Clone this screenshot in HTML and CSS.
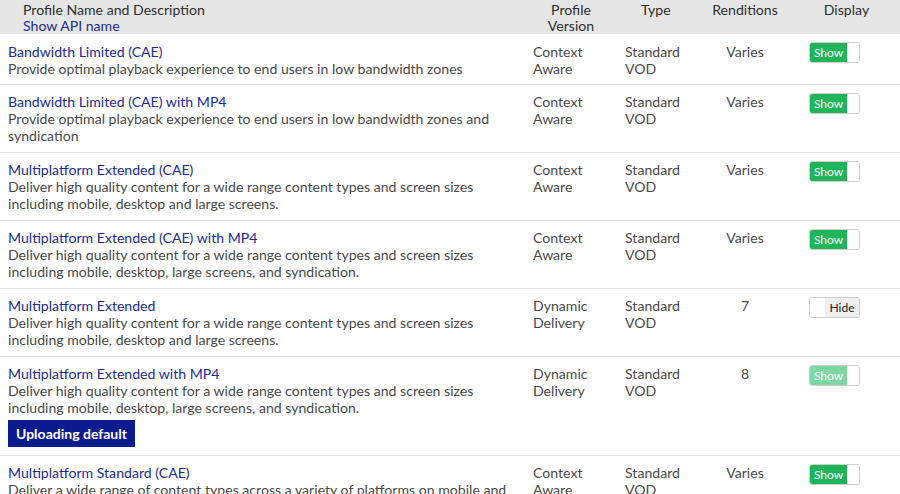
FILE: index.html
```html
<!DOCTYPE html>
<html>
<head>
<meta charset="utf-8">
<link rel="stylesheet" href="styles.css">
</head>
<body>
<table class="profiles">
  <colgroup>
    <col class="c-name"><col class="c-ver"><col class="c-type"><col class="c-rend"><col class="c-disp">
  </colgroup>
  <thead>
    <tr>
      <th class="h-name">Profile Name and Description<br><a class="link">Show API name</a></th>
      <th class="h-center">Profile<br>Version</th>
      <th class="h-type">Type</th>
      <th class="h-center">Renditions</th>
      <th class="h-center">Display</th>
    </tr>
  </thead>
  <tbody>
    <tr>
      <td><a class="link">Bandwidth Limited (CAE)</a><div class="desc">Provide optimal playback experience to end users in low bandwidth zones</div></td>
      <td>Context<br>Aware</td>
      <td>Standard<br>VOD</td>
      <td class="rend">Varies</td>
      <td class="disp"><span class="toggle on"><span class="lbl">Show</span><span class="knob"></span></span></td>
    </tr>
    <tr>
      <td><a class="link">Bandwidth Limited (CAE) with MP4</a><div class="desc">Provide optimal playback experience to end users in low bandwidth zones and syndication</div></td>
      <td>Context<br>Aware</td>
      <td>Standard<br>VOD</td>
      <td class="rend">Varies</td>
      <td class="disp"><span class="toggle on"><span class="lbl">Show</span><span class="knob"></span></span></td>
    </tr>
    <tr>
      <td><a class="link">Multiplatform Extended (CAE)</a><div class="desc">Deliver high quality content for a wide range content types and screen sizes including mobile, desktop and large screens.</div></td>
      <td>Context<br>Aware</td>
      <td>Standard<br>VOD</td>
      <td class="rend">Varies</td>
      <td class="disp"><span class="toggle on"><span class="lbl">Show</span><span class="knob"></span></span></td>
    </tr>
    <tr>
      <td><a class="link">Multiplatform Extended (CAE) with MP4</a><div class="desc">Deliver high quality content for a wide range content types and screen sizes including mobile, desktop, large screens, and syndication.</div></td>
      <td>Context<br>Aware</td>
      <td>Standard<br>VOD</td>
      <td class="rend">Varies</td>
      <td class="disp"><span class="toggle on"><span class="lbl">Show</span><span class="knob"></span></span></td>
    </tr>
    <tr>
      <td><a class="link">Multiplatform Extended</a><div class="desc">Deliver high quality content for a wide range content types and screen sizes including mobile, desktop and large screens.</div></td>
      <td>Dynamic<br>Delivery</td>
      <td>Standard<br>VOD</td>
      <td class="rend">7</td>
      <td class="disp"><span class="toggle off"><span class="knob"></span><span class="lbl">Hide</span></span></td>
    </tr>
    <tr>
      <td><a class="link">Multiplatform Extended with MP4</a><div class="desc">Deliver high quality content for a wide range content types and screen sizes including mobile, desktop, large screens, and syndication.</div><button class="default-btn">Uploading default</button></td>
      <td>Dynamic<br>Delivery</td>
      <td>Standard<br>VOD</td>
      <td class="rend">8</td>
      <td class="disp"><span class="toggle on faded"><span class="lbl">Show</span><span class="knob"></span></span></td>
    </tr>
    <tr>
      <td><a class="link">Multiplatform Standard (CAE)</a><div class="desc">Deliver a wide range of content types across a variety of platforms on mobile and desktop.</div></td>
      <td>Context<br>Aware</td>
      <td>Standard<br>VOD</td>
      <td class="rend">Varies</td>
      <td class="disp"><span class="toggle on"><span class="lbl">Show</span><span class="knob"></span></span></td>
    </tr>
  </tbody>
</table>
</body>
</html>
```

FILE: styles.css
```css
html, body {
  margin: 0;
  padding: 0;
  background: #fff;
}
body {
  font-family: Lato, "Open Sans", sans-serif;
  font-size: 14.1px;
  color: #4a4a4a;
  overflow: hidden;
  height: 494px;
}
.profiles {
  width: 900px;
  border-collapse: collapse;
  table-layout: fixed;
}
.c-name { width: 525px; }
.c-ver { width: 92px; }
.c-type { width: 80px; }
.c-rend { width: 96px; }
.c-disp { width: 107px; }

thead th {
  background: #e6e6e6;
  font-weight: normal;
  color: #2e2e2e;
  line-height: 16px;
  padding: 2px 0 0 0;
  height: 32px;
  vertical-align: top;
}
.h-name {
  text-align: left;
  padding-left: 23px;
}
.h-center {
  text-align: center;
}
.h-type {
  text-align: left;
  padding-left: 24px;
}
.link {
  color: #1c2c9c;
  text-decoration: none;
  cursor: pointer;
}
tbody td {
  vertical-align: top;
  padding: 8px 0 8px 8px;
  line-height: 17px;
  border-bottom: 1px solid #dedede;
}
tbody tr:first-child td {
  padding-top: 9px;
  padding-bottom: 7px;
}
.desc {
  color: #4a4a4a;
}
.rend {
  text-align: center;
  padding-left: 0;
}
tbody td.disp {
  padding-left: 16px;
}
.toggle {
  display: flex;
  width: 49px;
  height: 19px;
  border: 1px solid #cfcfcf;
  border-radius: 3px;
  overflow: hidden;
  font-size: 12px;
  line-height: 19px;
  background: #fff;
}
tbody tr:first-child .toggle {
  margin-top: -1px;
}
.toggle.on .lbl {
  background: #1db45a;
  color: #fff;
  width: 37px;
  text-align: center;
}
.toggle.faded .lbl {
  background: #7dd7a2;
}
.toggle .knob {
  flex: 1;
  background: #fff;
}
.toggle.off .knob {
  flex: 0 0 15px;
}
.toggle.off .lbl {
  flex: 1;
  background: #efefef;
  color: #222;
  text-align: center;
}
.default-btn {
  display: block;
  margin-top: 4px;
  height: 27px;
  padding: 0 8px 0 8px;
  border: none;
  border-radius: 0;
  background: #0c1c8e;
  color: #fff;
  font-family: Lato, "Open Sans", sans-serif;
  font-weight: bold;
  font-size: 14px;
}
```
